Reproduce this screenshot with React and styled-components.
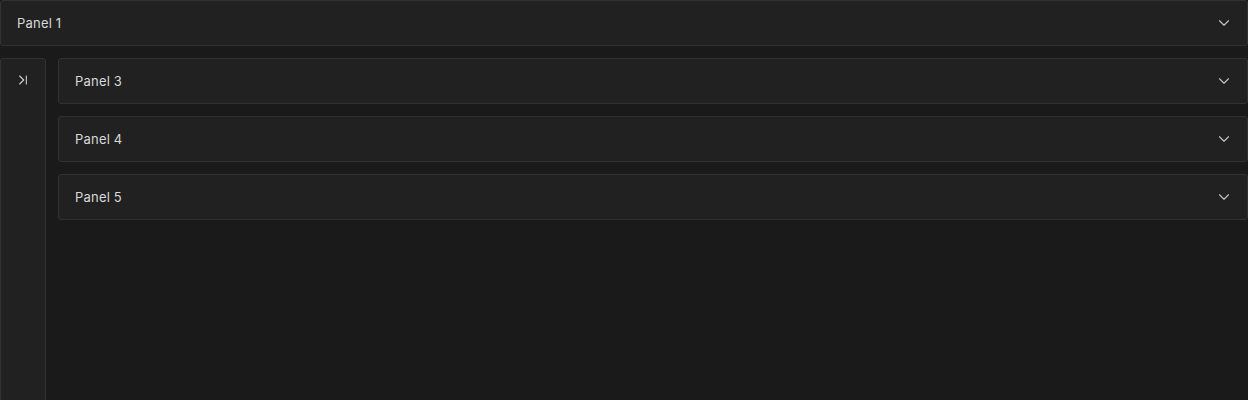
import React from 'react';
import styled, { createGlobalStyle } from 'styled-components';
import { ChevronDown, ChevronLast } from 'lucide-react';

const Global = createGlobalStyle`
  html, body {
    margin: 0;
    background: #1a1a1a;
    height: 100%;
  }
  body {
    font-family: Inter, "Noto Sans", sans-serif;
    color: #d6d6d6;
    overflow: hidden;
  }
`;

const Page = styled.div`
  display: flex;
  flex-direction: column;
  gap: 12px;
  height: 100vh;
`;

const Panel = styled.div`
  height: 46px;
  box-sizing: border-box;
  display: flex;
  align-items: center;
  justify-content: space-between;
  padding: 0 14px 0 16px;
  background: #212121;
  border: 1px solid #323232;
  border-radius: 3px;
  flex-shrink: 0;
`;

const Label = styled.span`
  font-size: 13px;
  letter-spacing: 0.2px;
  color: #d8d8d8;
`;

const Row = styled.div`
  flex: 1;
  display: flex;
  gap: 12px;
  min-height: 0;
`;

const Sidebar = styled.div`
  width: 46px;
  box-sizing: border-box;
  height: calc(100% + 4px);
  background: #212121;
  border: 1px solid #323232;
  border-radius: 3px;
  display: flex;
  justify-content: center;
  padding-top: 13px;
  color: #d0d0d0;
`;

const Stack = styled.div`
  flex: 1;
  display: flex;
  flex-direction: column;
  gap: 12px;
`;

const Chevron = styled(ChevronDown)`
  color: #c4c4c4;
`;

const AccordionPanel = ({ title }) => (
  <Panel>
    <Label>{title}</Label>
    <Chevron size={18} strokeWidth={1.5} />
  </Panel>
);

export default function App() {
  return (
    <Page>
      <Global />
      <AccordionPanel title="Panel 1" />
      <Row>
        <Sidebar>
          <ChevronLast size={16} strokeWidth={1.6} />
        </Sidebar>
        <Stack>
          <AccordionPanel title="Panel 3" />
          <AccordionPanel title="Panel 4" />
          <AccordionPanel title="Panel 5" />
        </Stack>
      </Row>
    </Page>
  );
}
